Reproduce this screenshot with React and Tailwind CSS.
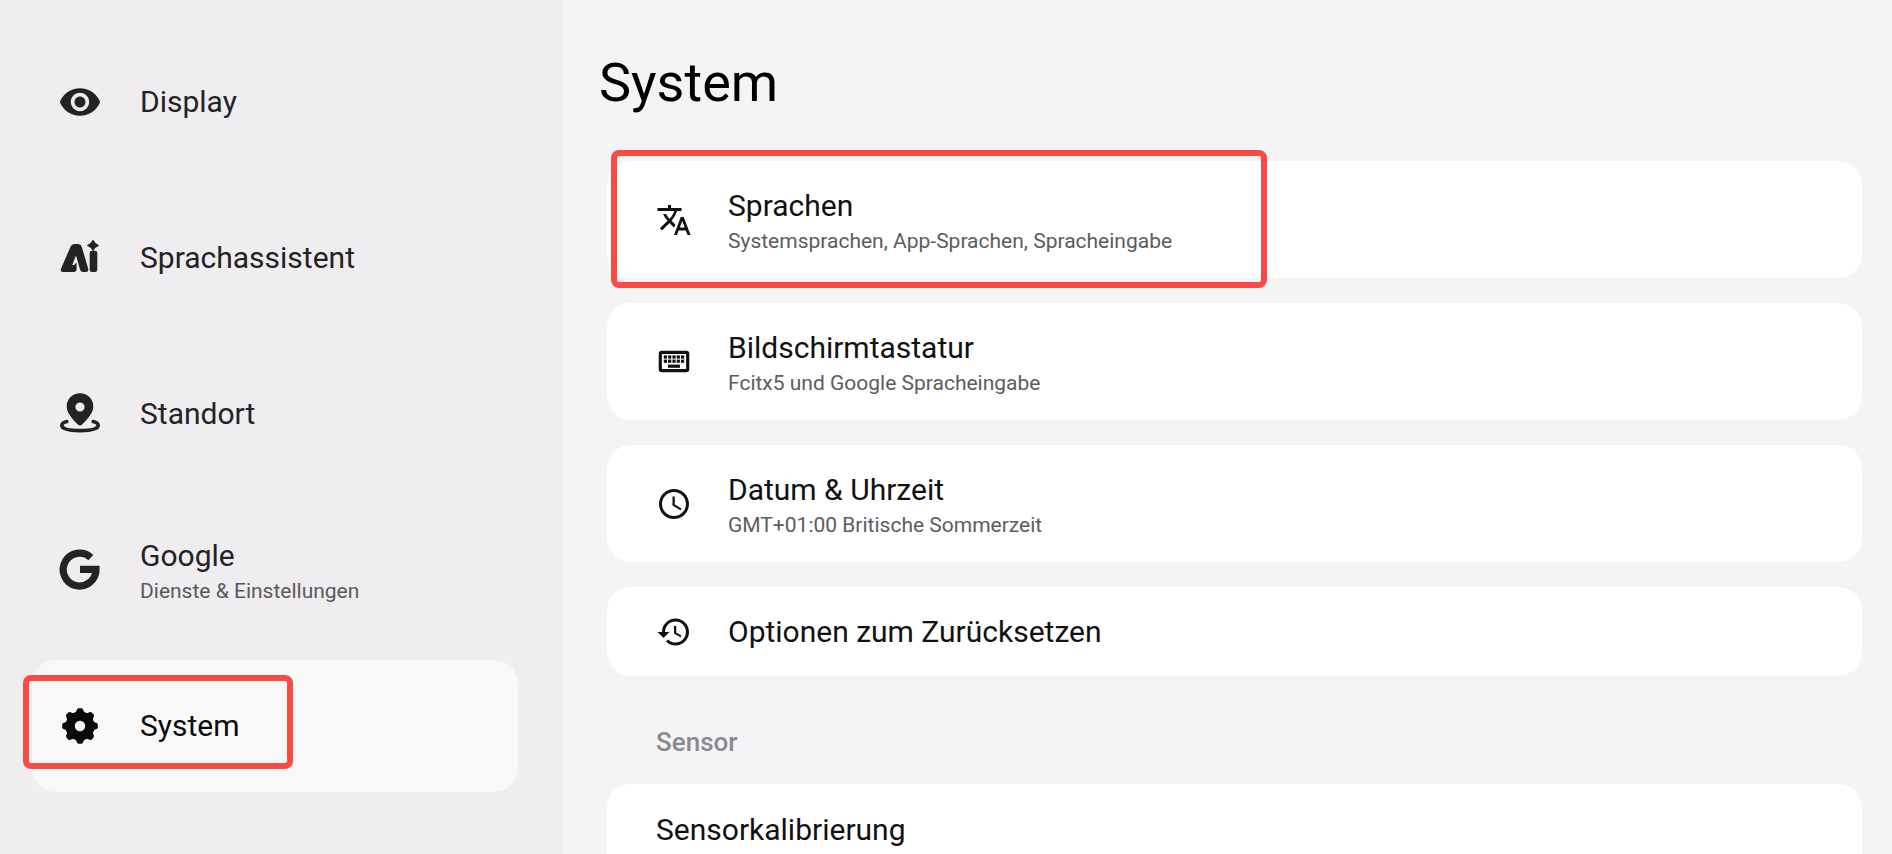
import { MdVisibility, MdTranslate, MdHistory, MdSchedule } from "react-icons/md";

function AiIcon() {
  return (
    <svg viewBox="0 0 40 40" className="size-10" fill="currentColor" aria-hidden="true">
      <path d="M10.2 9.4 Q11.6 6 14.8 6 H17.6 Q20.8 6 21.9 9.2 L28.2 30.8 Q29 34 26 34 H23 Q20.8 34 20.2 32 L16 17.6 L12.2 27 H14.2 L16.6 24.6 V31 Q16.6 34 13.6 34 H3 Q-.2 34 1 30.8 Z" />
      <rect x="29.7" y="12.8" width="7.6" height="21.2" rx="2.2" />
      <path d="M33 1.6 Q34.8 5.6 39.2 7.4 Q34.8 9.2 33 13.2 Q31.2 9.2 26.8 7.4 Q31.2 5.6 33 1.6Z" />
    </svg>
  );
}

function PinIcon() {
  return (
    <svg viewBox="0 0 40 40" className="size-10 overflow-visible" aria-hidden="true">
      <path
        fill="currentColor"
        fillRule="evenodd"
        d="M20 -.8 C12.4 -.8 6.7 4.9 6.7 12.2 C6.7 20 14.5 27 18.2 30.8 Q20 32.4 21.8 30.8 C25.5 27 33.3 20 33.3 12.2 C33.3 4.9 27.6 -.8 20 -.8Z M20 8.4 A4.6 4.6 0 1 1 20 17.6 A4.6 4.6 0 1 1 20 8.4Z"
      />
      <path
        d="M6.8 27.6 C2.8 28.6 1.8 30.4 1.8 31.6 C1.8 35 9 36.6 20 36.6 C31 36.6 38.2 35 38.2 31.6 C38.2 30.4 37.2 28.6 33.2 27.6"
        fill="none"
        stroke="currentColor"
        strokeWidth="3.6"
        strokeLinecap="round"
      />
    </svg>
  );
}

function GIcon() {
  return (
    <svg viewBox="0 0 40 40" className="size-10 overflow-visible" aria-hidden="true">
      <path
        d="M30.8 7.6 A16.4 16.4 0 1 0 36 19.4 H20"
        fill="none"
        stroke="currentColor"
        strokeWidth="7.2"
      />
    </svg>
  );
}

function GearIcon() {
  return (
    <svg viewBox="0 0 40 40" className="size-10" fill="currentColor" aria-hidden="true">
      <circle cx="20" cy="20" r="9.9" fill="none" stroke="currentColor" strokeWidth="9.4" />
      {[0, 45, 90, 135, 180, 225, 270, 315].map((angle) => (
        <path
          key={angle}
          transform={`rotate(${angle} 20 20)`}
          d="M15.2 7.6 L17 3.4 Q17.6 2.2 18.8 2.2 H21.2 Q22.4 2.2 23 3.4 L24.8 7.6 Z"
        />
      ))}
    </svg>
  );
}

function KeyboardIcon() {
  return (
    <svg viewBox="0 0 32 32" className="size-8" aria-hidden="true">
      <rect x="2.3" y="6.3" width="27.4" height="18.4" rx="1.6" fill="none" stroke="currentColor" strokeWidth="3.2" />
      {[0, 1, 2, 3, 4].map((k) => (
        <g key={k} fill="currentColor">
          <rect x={5.8 + k * 4.3} y="9.4" width="3.2" height="3.2" />
          <rect x={5.8 + k * 4.3} y="13.6" width="3.2" height="3.2" />
        </g>
      ))}
      <rect x="10" y="18.6" width="12" height="3.2" fill="currentColor" />
    </svg>
  );
}

const nav = [
  { title: "Display", icon: <MdVisibility className="size-11" /> },
  { title: "Sprachassistent", icon: <AiIcon /> },
  { title: "Standort", icon: <PinIcon /> },
  { title: "Google", sub: "Dienste & Einstellungen", icon: <GIcon /> },
  { title: "System", icon: <GearIcon />, active: true },
];

const cards = [
  {
    title: "Sprachen",
    sub: "Systemsprachen, App-Sprachen, Spracheingabe",
    icon: <MdTranslate className="size-9" />,
    marked: true,
  },
  { title: "Bildschirmtastatur", sub: "Fcitx5 und Google Spracheingabe", icon: <KeyboardIcon /> },
  { title: "Datum & Uhrzeit", sub: "GMT+01:00 Britische Sommerzeit", icon: <MdSchedule className="size-9" /> },
  { title: "Optionen zum Zurücksetzen", icon: <MdHistory className="size-9" /> },
];

function Label({ title, sub, subClass }) {
  return (
    <span className={`flex flex-col ${sub ? "pt-0.5" : ""}`}>
      <span className="text-[30px] leading-10">{title}</span>
      {sub && <span className={`text-[21px] leading-[30px] ${subClass}`}>{sub}</span>}
    </span>
  );
}

export default function App() {
  return (
    <div className="flex h-screen overflow-hidden bg-[#f4f4f7] font-[Roboto,sans-serif]">
      <nav className="w-[563px] shrink-0 bg-[#efedf0] pt-9 pr-[45px] pl-8">
        <ul className="flex flex-col gap-6">
          {nav.map((item) => (
            <li key={item.title} className="relative">
              <button
                type="button"
                aria-current={item.active ? "page" : undefined}
                className={`flex h-[132px] w-full items-center gap-9 rounded-3xl pl-6 text-left ${
                  item.active ? "bg-[#f8f8f8] text-[#0a0a0b]" : "text-[#232325]"
                }`}
              >
                <span className="flex w-12 shrink-0 justify-center">{item.icon}</span>
                <Label title={item.title} sub={item.sub} subClass="text-[#59595c]" />
              </button>
              {item.active && (
                <span className="pointer-events-none absolute top-[15px] -left-[9px] h-[94px] w-[270px] rounded-lg border-6 border-[#f94b46]" />
              )}
            </li>
          ))}
        </ul>
      </nav>

      <main className="min-w-0 flex-1 pt-[47px] pr-[30px] pl-9">
        <h1 className="text-[54px] leading-[72px] text-black">System</h1>
        <ul className="mt-[42px] ml-2 flex flex-col gap-[25px]">
          {cards.map((card) => (
            <li key={card.title} className="relative">
              <button
                type="button"
                className={`flex w-full items-center gap-[30px] rounded-3xl bg-white pl-[43px] text-left text-[#111113] ${
                  card.sub ? "h-[117px]" : "h-[89px]"
                }`}
              >
                <span className="flex w-12 shrink-0 justify-center">{card.icon}</span>
                <Label title={card.title} sub={card.sub} subClass="text-[#5c5c60]" />
              </button>
              {card.marked && (
                <span className="pointer-events-none absolute -top-[11px] left-1 h-[138px] w-[656px] rounded-lg border-6 border-[#f94b46]" />
              )}
            </li>
          ))}
        </ul>
        <h2 className="mt-[50px] ml-[57px] text-[26px] leading-8 font-medium text-[#8a8a8d]">Sensor</h2>
        <button
          type="button"
          className="mt-[26px] ml-2 flex h-[117px] w-[calc(100%-8px)] items-start rounded-3xl bg-white pt-[26px] pl-[49px] text-left text-[#111113]"
        >
          <Label title="Sensorkalibrierung" />
        </button>
      </main>
    </div>
  );
}
